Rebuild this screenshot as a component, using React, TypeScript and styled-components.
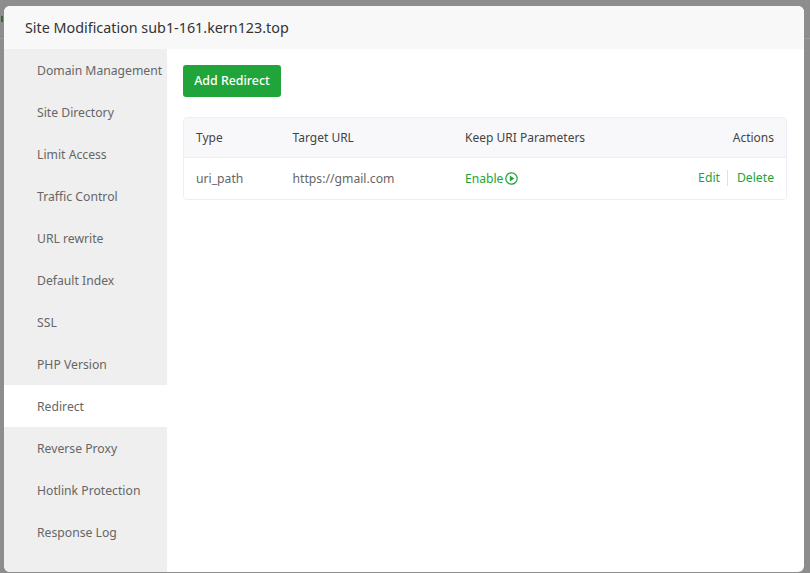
import React from "react";
import styled, { createGlobalStyle } from "styled-components";

const Global = createGlobalStyle`
  html, body { margin: 0; padding: 0; height: 100%; overflow: hidden; }
  body { font-family: "Noto Sans", "Noto Sans CJK SC", sans-serif; }
  #root { height: 100%; }
`;

const Backdrop = styled.div`
  position: relative;
  width: 810px;
  height: 573px;
  background: linear-gradient(#8d8d8d 38px, #9a9a9a 38px, #9a9a9a 39px, #8d8d8d 39px);
  padding: 6px 6px 0 4px;
  box-sizing: border-box;
  overflow: hidden;
`;

/* The clipped letter of the page that lies behind the dimmed overlay. */
const PageGlimpse = styled.span`
  position: absolute;
  left: 1px;
  top: 16px;
  width: 2px;
  height: 6px;
  background: #2f6b3f;
`;

const Modal = styled.div`
  position: relative;
  width: 800px;
  height: 566px;
  background: #fff;
  border-radius: 6px;
  overflow: hidden;
  display: flex;
  flex-direction: column;
`;

const Header = styled.header`
  height: 43px;
  flex: none;
  background: #f8f8f8;
  display: flex;
  align-items: center;
  padding-left: 21px;
  font-size: 14.33px;
  color: #333;
`;

const Body = styled.div`
  flex: 1;
  display: flex;
  min-height: 0;
`;

const Side = styled.nav`
  width: 163px;
  flex: none;
  background: #efefef;
`;

const SideItem = styled.div<{ $active?: boolean }>`
  height: 42px;
  line-height: 44px;
  padding-left: 33px;
  font-size: 12.2px;
  white-space: nowrap;
  color: #666;
  background: ${(p) => (p.$active ? "#fff" : "transparent")};
`;

const Main = styled.main`
  flex: 1;
  padding: 16px 17px 0 16px;
  display: flex;
  flex-direction: column;
  align-items: flex-start;
`;

const AddButton = styled.button`
  width: 98px;
  height: 32px;
  border: 0;
  border-radius: 3px;
  background: #20a53a;
  color: #fff;
  font: inherit;
  font-size: 12.4px;
  padding: 0 0 2px;
  font-weight: 500;
`;

const Table = styled.div`
  margin-top: 20px;
  width: 604px;
  box-sizing: border-box;
  border: 1px solid #ebeef5;
  border-radius: 4px;
  overflow: hidden;
`;

const Row = styled.div<{ $head?: boolean }>`
  display: grid;
  grid-template-columns: 96.5px 172.5px 1fr auto;
  align-items: center;
  height: ${(p) => (p.$head ? "39px" : "41px")};
  padding: 0 12px;
  background: ${(p) => (p.$head ? "#f8f8fb" : "#fff")};
  color: ${(p) => (p.$head ? "#444" : "#666")};
  font-size: ${(p) => (p.$head ? "12px" : "12.2px")};
  border-bottom: ${(p) => (p.$head ? "1px solid #ebeef5" : "0")};
`;

const Status = styled.span`
  display: inline-flex;
  align-items: center;
  gap: 2px;
  font-size: 12.1px;
  color: #20a53a;
`;

const Actions = styled.span`
  display: inline-flex;
  align-items: center;
  color: #20a53a;
  position: relative;
  top: -1px;
`;

const Divider = styled.span`
  width: 1px;
  height: 16px;
  background: #e0e0e0;
  margin: 0 9px 0 7px;
`;

const items = [
  "Domain Management",
  "Site Directory",
  "Limit Access",
  "Traffic Control",
  "URL rewrite",
  "Default Index",
  "SSL",
  "PHP Version",
  "Redirect",
  "Reverse Proxy",
  "Hotlink Protection",
  "Response Log",
];

const PlayIcon = () => (
  <svg width="13" height="13" viewBox="0 0 13 13" aria-hidden="true">
    <circle cx="6.5" cy="6.5" r="5.7" fill="none" stroke="#20a53a" strokeWidth="1.2" />
    <path d="M4.8 3.4 L9.4 6.5 L4.8 9.6 Z" fill="#20a53a" />
  </svg>
);

export default function App() {
  return (
    <>
      <Global />
      <Backdrop>
        <PageGlimpse />
        <Modal>
          <Header>Site Modification sub1-161.kern123.top</Header>
          <Body>
            <Side>
              {items.map((t) => (
                <SideItem key={t} $active={t === "Redirect"}>
                  {t}
                </SideItem>
              ))}
            </Side>
            <Main>
              <AddButton>Add Redirect</AddButton>
              <Table>
                <Row $head>
                  <span>Type</span>
                  <span>Target URL</span>
                  <span>Keep URI Parameters</span>
                  <span>Actions</span>
                </Row>
                <Row>
                  <span>uri_path</span>
                  <span>https://gmail.com</span>
                  <Status>
                    Enable <PlayIcon />
                  </Status>
                  <Actions>
                    Edit
                    <Divider />
                    Delete
                  </Actions>
                </Row>
              </Table>
            </Main>
          </Body>
        </Modal>
      </Backdrop>
    </>
  );
}
